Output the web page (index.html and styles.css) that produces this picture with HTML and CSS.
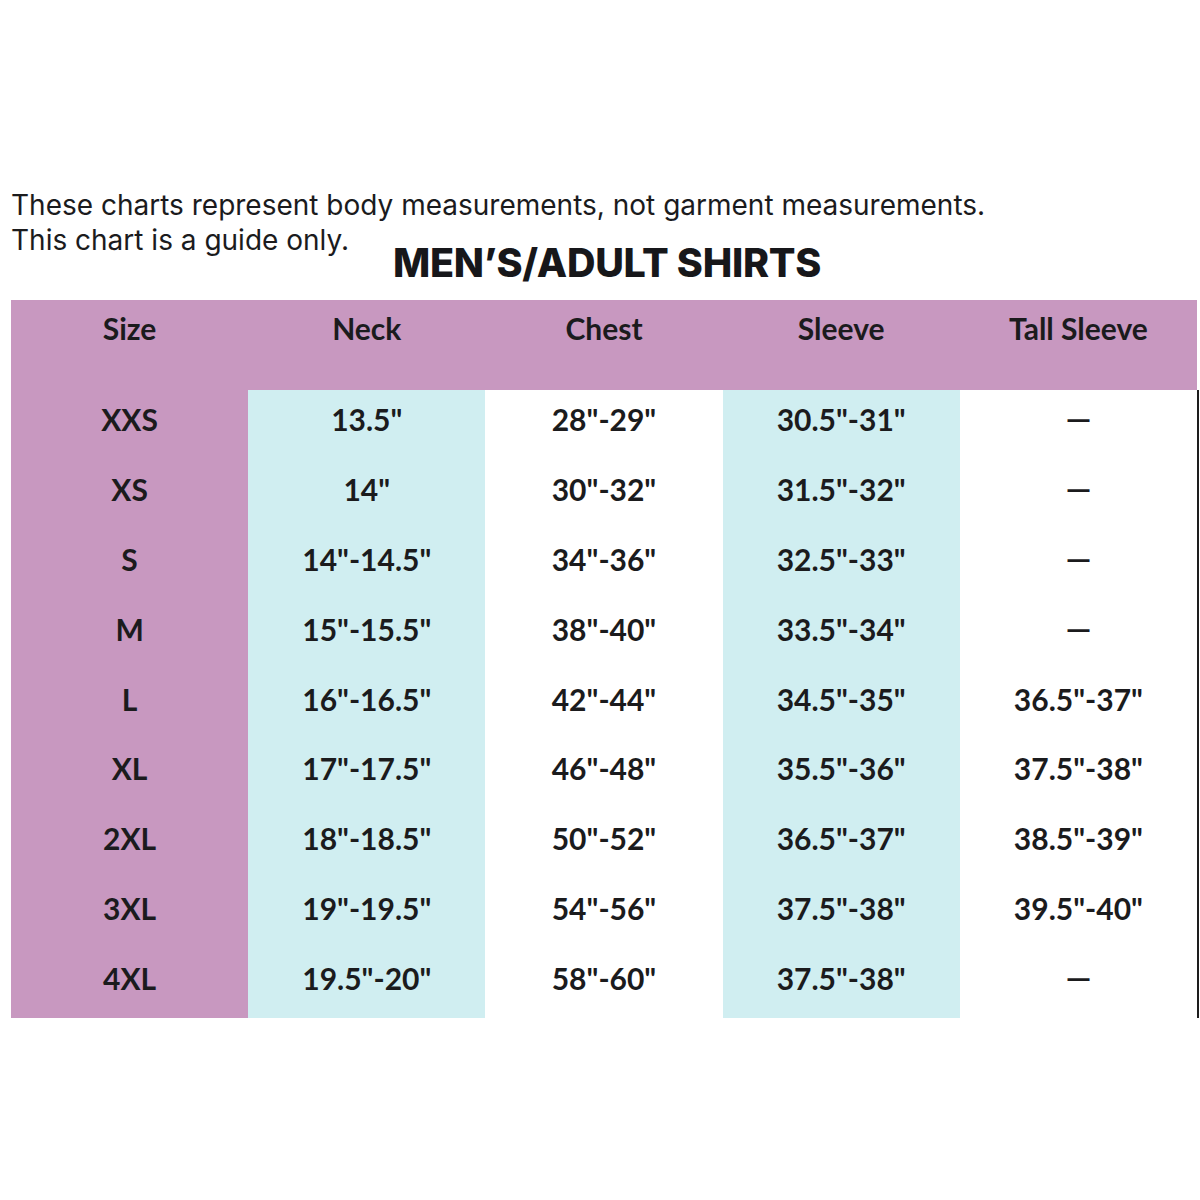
FILE: index.html
```html
<!DOCTYPE html>
<html>
<head>
<meta charset="utf-8">
<link rel="stylesheet" href="styles.css">
</head>
<body>
<div class="page">
  <div class="intro">
    <p>These charts represent body measurements, not garment measurements.</p>
    <p>This chart is a guide only.</p>
  </div>
  <h1 class="title">MEN’S/ADULT SHIRTS</h1>
  <div class="chart">
    <div class="head">
      <div>Size</div><div>Neck</div><div>Chest</div><div>Sleeve</div><div>Tall Sleeve</div>
    </div>
    <div class="body">
      <div class="col c-size">
        <div>XXS</div><div>XS</div><div>S</div><div>M</div><div>L</div><div>XL</div><div>2XL</div><div>3XL</div><div>4XL</div>
      </div>
      <div class="col c-neck">
        <div>13.5"</div><div>14"</div><div>14"-14.5"</div><div>15"-15.5"</div><div>16"-16.5"</div><div>17"-17.5"</div><div>18"-18.5"</div><div>19"-19.5"</div><div>19.5"-20"</div>
      </div>
      <div class="col c-chest">
        <div>28"-29"</div><div>30"-32"</div><div>34"-36"</div><div>38"-40"</div><div>42"-44"</div><div>46"-48"</div><div>50"-52"</div><div>54"-56"</div><div>58"-60"</div>
      </div>
      <div class="col c-sleeve">
        <div>30.5"-31"</div><div>31.5"-32"</div><div>32.5"-33"</div><div>33.5"-34"</div><div>34.5"-35"</div><div>35.5"-36"</div><div>36.5"-37"</div><div>37.5"-38"</div><div>37.5"-38"</div>
      </div>
      <div class="col c-tall">
        <div class="dash">—</div><div class="dash">—</div><div class="dash">—</div><div class="dash">—</div><div>36.5"-37"</div><div>37.5"-38"</div><div>38.5"-39"</div><div>39.5"-40"</div><div class="dash">—</div>
      </div>
    </div>
  </div>
</div>
</body>
</html>
```

FILE: styles.css
```css
html, body {
  margin: 0;
  padding: 0;
  background: #ffffff;
}
.page {
  width: 1200px;
  padding-top: 188px;
  font-family: Lato, "Noto Sans", sans-serif;
  color: #1b1b1d;
}
.intro {
  margin-left: 11px;
  font-family: Inter, "Noto Sans", sans-serif;
  font-size: 28px;
  line-height: 35px;
}
.intro p {
  margin: 0;
}
.title {
  margin: -21px 0 0 0;
  font-family: Inter, "Noto Sans", sans-serif;
  font-size: 39.5px;
  line-height: 52px;
  font-weight: 800;
  text-align: center;
  padding-left: 14px;
  color: #17171a;
  letter-spacing: -0.3px;
}
.chart {
  margin: 11px 0 0 11px;
  width: 1188px;
}
.head {
  display: grid;
  grid-template-columns: repeat(5, 1fr);
  height: 90px;
  background: #c898c0;
  margin-right: 2px;
}
.head div {
  text-align: center;
  font-size: 30px;
  font-weight: 700;
  padding-top: 11px;
  line-height: 34px;
}
.body {
  display: grid;
  grid-template-columns: repeat(5, 1fr);
  height: 628px;
  border-right: 2px solid #1d1d1d;
}
.col {
  display: flex;
  flex-direction: column;
}
.col div {
  flex: 1;
  display: flex;
  align-items: center;
  justify-content: center;
  font-size: 30px;
  font-weight: 700;
  padding-bottom: 11px;
}
.col div.dash {
  font-family: Inter, "Noto Sans", sans-serif;
  font-size: 22px;
  font-weight: 800;
}
.c-size { background: #c898c0; }
.c-neck { background: #d0eef1; }
.c-chest { background: #ffffff; }
.c-sleeve { background: #d0eef1; }
.c-tall { background: #ffffff; }
```
